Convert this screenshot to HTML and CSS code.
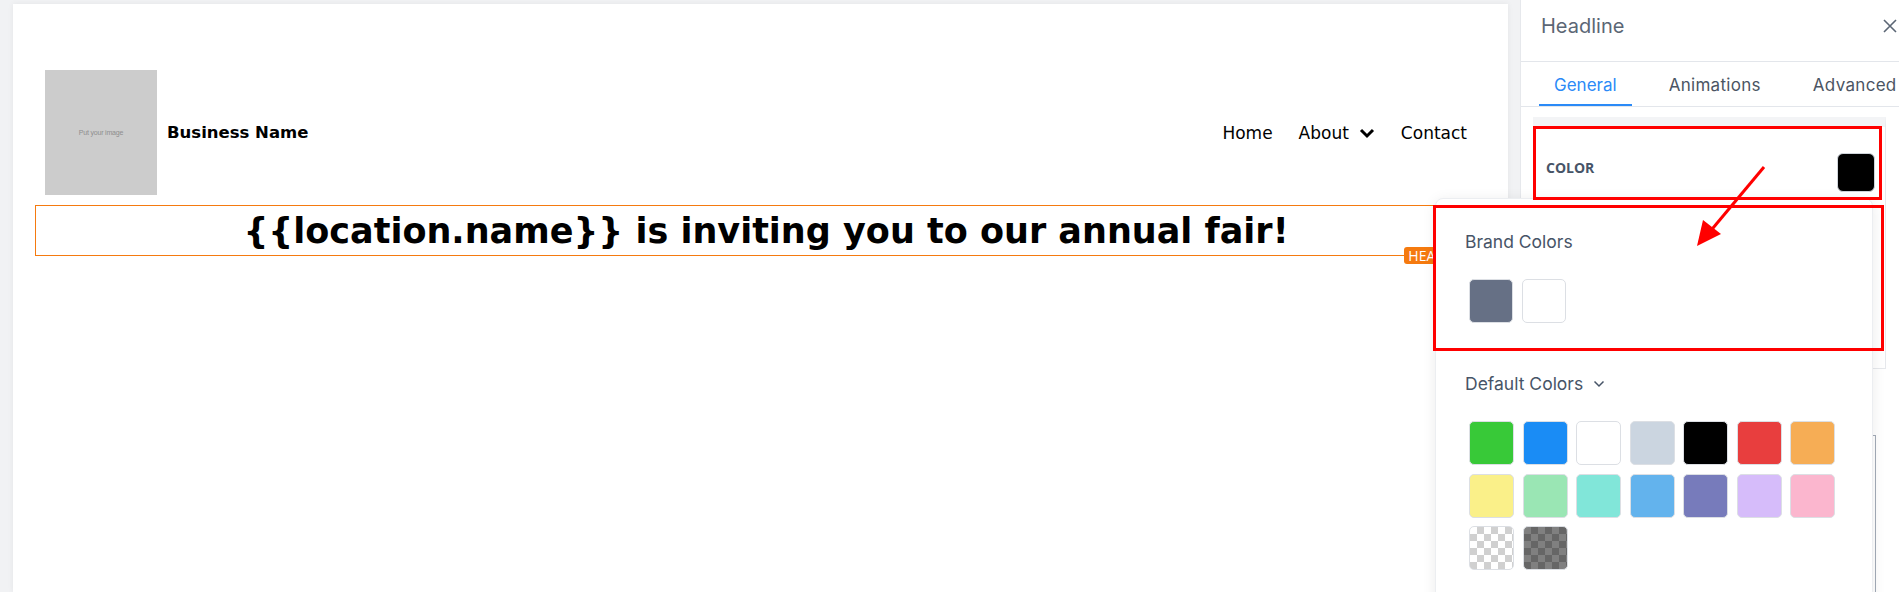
FILE: index.html
```html
<!DOCTYPE html>
<html>
    <head>
        <meta charset="utf-8">
        <title>Page Builder</title>
        <link rel="stylesheet" href="styles.css">
    </head>
    <body>
        <div class="editor">
            <main class="stage">
                <div class="canvas">
                    <header class="site_header">
                        <div class="brand">
                            <div class="logo_ph"><span>Put your image</span></div>
                            <span class="biz_name">Business Name</span>
                        </div>
                        <nav class="site_nav">
                            <a href="#">Home</a>
                            <a href="#">About
                                <svg width="16" height="12" viewBox="0 0 16 12"><path d="M2 3l6 6 6-6" fill="none" stroke="#000" stroke-width="3"/></svg>
                            </a>
                            <a href="#">Contact</a>
                        </nav>
                    </header>
                    <div class="headline_el">
                        <h1>{{location.name}} is inviting you to our annual fair!</h1>
                        <span class="el_badge">HEADLINE</span>
                    </div>
                </div>
            </main>

            <aside class="panel">
                <div class="panel_head">
                    <span>Headline</span>
                    <svg width="16" height="16" viewBox="0 0 16 16"><path d="M2 2l12 12M14 2L2 14" stroke="#5b6675" stroke-width="1.6"/></svg>
                </div>
                <div class="tabs">
                    <span class="tab active">General</span>
                    <span class="tab">Animations</span>
                    <span class="tab">Advanced</span>
                </div>
                <div class="panel_body">
                    <div class="settings_card">
                        <div class="color_row">
                            <span class="color_label">COLOR</span>
                            <span class="current_swatch"></span>
                        </div>
                    </div>
                    <div class="typo_box"></div>
                </div>
            </aside>
        </div>

        <!-- colour picker dropdown -->
        <div class="picker">
            <div class="picker_sec">
                <div class="picker_title">Brand Colors</div>
                <div class="swatches">
                    <span class="sw" style="background:#667085"></span>
                    <span class="sw" style="background:#ffffff"></span>
                </div>
            </div>
            <div class="picker_sec">
                <div class="picker_title">Default Colors
                    <svg width="12" height="8" viewBox="0 0 12 8"><path d="M1.5 1.5l4.5 4.5 4.5-4.5" fill="none" stroke="#475467" stroke-width="1.5"/></svg>
                </div>
                <div class="swatches grid">
                    <span class="sw" style="background:#38c938"></span>
                    <span class="sw" style="background:#1a8cf5"></span>
                    <span class="sw" style="background:#ffffff"></span>
                    <span class="sw" style="background:#cbd5e0"></span>
                    <span class="sw" style="background:#000000"></span>
                    <span class="sw" style="background:#e83e3e"></span>
                    <span class="sw" style="background:#f6ad55"></span>
                    <span class="sw" style="background:#faf089"></span>
                    <span class="sw" style="background:#9ae6b4"></span>
                    <span class="sw" style="background:#81e6d9"></span>
                    <span class="sw" style="background:#63b3ed"></span>
                    <span class="sw" style="background:#777bbb"></span>
                    <span class="sw" style="background:#d6bcfa"></span>
                    <span class="sw" style="background:#fbb6ce"></span>
                    <span class="sw checker_light"></span>
                    <span class="sw checker_dark"></span>
                </div>
            </div>
        </div>

        <!-- red callouts -->
        <div class="mark mark_color"></div>
        <div class="mark mark_brand"></div>
        <svg class="mark_arrow" width="90" height="100" viewBox="0 0 90 100">
            <path d="M80 5L24 72" stroke="#ff0000" stroke-width="3"/>
            <path d="M13 84l6-26 18 14z" fill="#ff0000"/>
        </svg>
    </body>
</html>
```

FILE: styles.css
```css
html, body{
    margin: 0;
    height: 592px;
    overflow: hidden;
}
body{
    background: #f1f2f4;
    font-family: "Inter", sans-serif;
    position: relative;
}
.editor{
    display: flex;
    height: 592px;
}

/* left side: the page being edited */
.stage{
    width: 1495px;
    padding: 4px 12px 0 13px;
    flex: none;
}
.canvas{
    background: #fff;
    height: 100%;
    box-shadow: 0 0 6px rgba(0,0,0,.06);
    padding-top: 66px;
    box-sizing: border-box;
    font-family: "DejaVu Sans", sans-serif;
}
.site_header{
    display: flex;
    align-items: center;
    justify-content: space-between;
    padding: 0 41px 0 32px;
}
.brand{
    display: flex;
    align-items: center;
    gap: 10px;
}
.logo_ph{
    width: 112px;
    height: 125px;
    background: #cccccc;
    display: flex;
    align-items: center;
    justify-content: center;
}
.logo_ph span{
    font-family: "Liberation Sans", sans-serif;
    font-size: 7px;
    color: #8e8e8e;
    letter-spacing: -0.2px;
}
.biz_name{
    font-size: 16.5px;
    font-weight: 700;
    color: #000;
}
.site_nav{
    display: flex;
    align-items: center;
    gap: 26px;
}
.site_nav a{
    color: #000;
    text-decoration: none;
    font-size: 17px;
    display: flex;
    align-items: center;
    gap: 10px;
}
.headline_el{
    position: relative;
    margin: 10px 11px 0 22px;
    border: 1px solid #f57a0f;
    height: 49px;
}
.headline_el h1{
    margin: 0;
    padding-top: 1px;
    text-align: center;
    font-size: 35px;
    line-height: 48px;
    font-weight: 700;
    color: #000;
}
.el_badge{
    position: absolute;
    right: 17px;
    bottom: -9px;
    background: #f57a0f;
    color: #fff;
    font-family: "Open Sans", sans-serif;
    font-size: 14px;
    line-height: 17px;
    padding: 0 4px;
    border-radius: 3px;
}

/* right side: settings panel */
.panel{
    flex: 1;
    background: #fff;
    border-left: 1px solid #e6e8ec;
    overflow: hidden;
}
.panel_head{
    height: 62px;
    box-sizing: border-box;
    border-bottom: 1px solid #e3e6eb;
    padding: 12px 1px 0 20px;
    display: flex;
    justify-content: space-between;
    align-items: flex-start;
    color: #5b6675;
    font-size: 20px;
    line-height: 28px;
}
.panel_head svg{
    margin-top: 6px;
}
.tabs{
    display: flex;
    gap: 22px;
    padding-left: 18px;
    height: 44px;
    border-bottom: 1px solid #e3e6eb;
    white-space: nowrap;
}
.tab{
    padding: 0 15px;
    font-size: 17px;
    line-height: 46px;
    height: 42px;
    color: #4b5563;
    border-bottom: 2px solid transparent;
}
.tab + .tab{
    letter-spacing: 0.3px;
}
.tab.active{
    color: #2b8af7;
    border-color: #2b8af7;
}
.panel_body{
    padding: 10px 13px 0 12px;
}
.settings_card{
    border: 1px solid #e6e8ec;
    border-top: 10px solid #f3f4f6;
    border-left: 0;
    height: 241px;
}
.color_row{
    height: 73px;
    box-sizing: border-box;
    padding: 26px 10px 8px 13px;
    display: flex;
    align-items: center;
    justify-content: space-between;
}
.color_label{
    font-family: "Open Sans", sans-serif;
    font-size: 14px;
    font-weight: 700;
    color: #475467;
    margin-bottom: 10px;
}
.current_swatch{
    width: 38px;
    height: 39px;
    background: #000;
    border: 1px solid #cfd4da;
    border-radius: 6px;
    box-sizing: border-box;
}
.typo_box{
    margin-top: 66px;
    height: 200px;
    border: 1px solid #a3abb8;
    margin-right: 10px;
}

/* colour picker dropdown */
.picker{
    position: absolute;
    left: 1435px;
    top: 198px;
    width: 438px;
    height: 420px;
    background: #fff;
    border: 1px solid #eceef1;
    border-radius: 8px;
    box-shadow: 0 2px 14px rgba(0,0,0,.08);
    box-sizing: border-box;
    padding: 31px 0 0 29px;
}
.picker_title{
    font-size: 17.5px;
    line-height: 24px;
    color: #475467;
    display: flex;
    align-items: center;
    gap: 10px;
}
.swatches{
    display: flex;
    gap: 9px;
    margin-top: 25px;
    padding-left: 4px;
}
.swatches.grid{
    display: grid;
    grid-template-columns: repeat(7, 45px);
    column-gap: 8.5px;
    row-gap: 8.5px;
}
.sw{
    width: 44px;
    height: 44px;
    border: 1px solid #dcdfe4;
    border-radius: 5px;
    box-sizing: border-box;
}
.grid .sw{
    width: 45px;
}
.picker_sec + .picker_sec{
    margin-top: 49px;
}
.checker_light{
    background-color: #fff;
    background-image:
        linear-gradient(45deg, #d0d0d0 25%, transparent 25%, transparent 75%, #d0d0d0 75%),
        linear-gradient(45deg, #d0d0d0 25%, transparent 25%, transparent 75%, #d0d0d0 75%);
    background-size: 14px 14px;
    background-position: 0 0, 7px 7px;
}
.checker_dark{
    background-color: #808080;
    background-image:
        linear-gradient(45deg, #666 25%, transparent 25%, transparent 75%, #666 75%),
        linear-gradient(45deg, #666 25%, transparent 25%, transparent 75%, #666 75%);
    background-size: 14px 14px;
    background-position: 0 0, 7px 7px;
}

/* red callout boxes and arrow */
.mark{
    position: absolute;
    border: 3px solid #ff0000;
    box-sizing: border-box;
}
.mark_color{
    left: 1533px;
    top: 126px;
    width: 349px;
    height: 74px;
}
.mark_brand{
    left: 1433px;
    top: 205px;
    width: 451px;
    height: 146px;
}
.mark_arrow{
    position: absolute;
    left: 1684px;
    top: 162px;
}
```
